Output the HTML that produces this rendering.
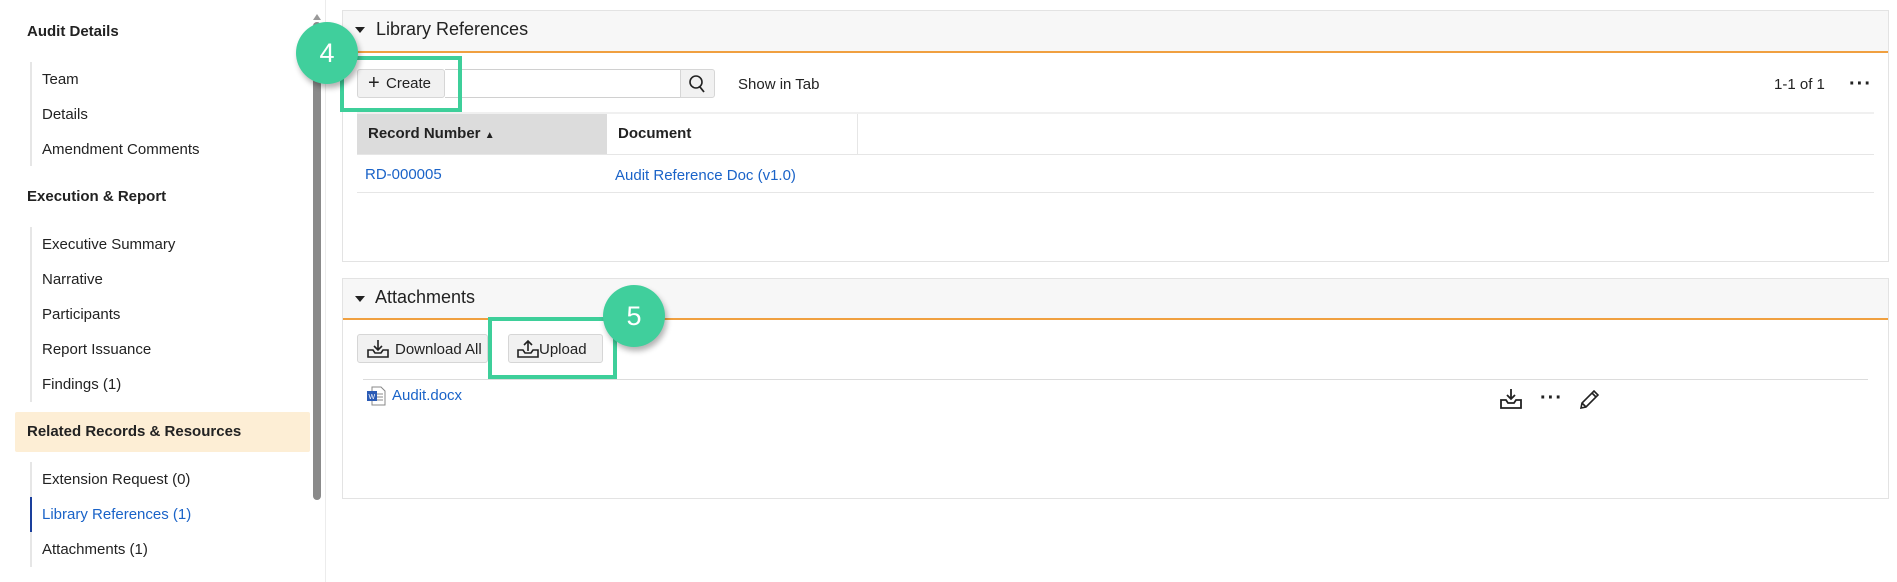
<!DOCTYPE html>
<html><head><meta charset="utf-8"><style>
*{box-sizing:border-box;margin:0;padding:0}
body{width:1897px;height:582px;background:#fff;font-family:"Liberation Sans",Arial,sans-serif;color:#222;position:relative;overflow:hidden;font-size:15px}
.a{position:absolute;white-space:nowrap}
.h{font-weight:bold;font-size:15px}
.it{font-size:15px;line-height:18px}
.vl{position:absolute;width:2px;background:#e6e6e6;left:30px}
.blue{color:#1a63c8}
.panel{position:absolute;left:342px;width:1547px;border:1px solid #e3e3e3;background:#fff}
.ph{position:absolute;left:0;top:0;right:0;background:#f7f7f7;border-bottom:2px solid #f0a040}
.btn{position:absolute;border:1px solid #d6d6d6;background:#f1f1f1;border-radius:3px;font-size:15px}
.green{position:absolute;border:4px solid #3ecf9a}
.circ{position:absolute;width:62px;height:62px;border-radius:50%;background:#40cf9c;color:#fff;font-size:27px;text-align:center;line-height:62px;box-shadow:2px 4px 6px rgba(0,0,0,.3)}
</style></head><body>
<!-- sidebar -->
<div class="a h" style="left:27px;top:23px">Audit Details</div>
<div class="vl" style="top:62px;height:104px"></div>
<div class="a it" style="left:42px;top:71px">Team</div>
<div class="a it" style="left:42px;top:106px">Details</div>
<div class="a it" style="left:42px;top:141px">Amendment Comments</div>
<div class="a h" style="left:27px;top:188px">Execution &amp; Report</div>
<div class="vl" style="top:227px;height:175px"></div>
<div class="a it" style="left:42px;top:236px">Executive Summary</div>
<div class="a it" style="left:42px;top:271px">Narrative</div>
<div class="a it" style="left:42px;top:306px">Participants</div>
<div class="a it" style="left:42px;top:341px">Report Issuance</div>
<div class="a it" style="left:42px;top:376px">Findings (1)</div>
<div class="a" style="left:15px;top:412px;width:295px;height:40px;background:#fdeed5;border-radius:2px"></div>
<div class="a h" style="left:27px;top:423px">Related Records &amp; Resources</div>
<div class="vl" style="top:462px;height:105px"></div>
<div class="a" style="left:30px;top:497px;width:2px;height:35px;background:#1a3f9c"></div>
<div class="a it" style="left:42px;top:471px">Extension Request (0)</div>
<div class="a it blue" style="left:42px;top:506px">Library References (1)</div>
<div class="a it" style="left:42px;top:541px">Attachments (1)</div>
<!-- scrollbar -->
<div class="a" style="left:313px;top:22px;width:8px;height:478px;background:#8a8a8a;border-radius:4px"></div>
<div class="a" style="left:313px;top:14px;width:0;height:0;border-left:4px solid transparent;border-right:4px solid transparent;border-bottom:6px solid #999"></div>
<div class="a" style="left:325px;top:0;width:1px;height:582px;background:#ececec"></div>

<!-- panel 1 -->
<div class="panel" style="top:10px;height:252px">
  <div class="ph" style="height:42px"></div>
</div>
<div class="a" style="left:355px;top:27px;border-left:5px solid transparent;border-right:5px solid transparent;border-top:6px solid #222"></div>
<div class="a" style="left:376px;top:19px;font-size:18px">Library References</div>
<div class="btn" style="left:357px;top:69px;width:88px;height:29px"><span class="a" style="left:10px;top:2px;font-size:20px">+</span><span class="a" style="left:28px;top:5px">Create</span></div>
<div class="a" style="left:445px;top:69px;width:236px;height:29px;border:1px solid #d0d0d0;border-left:none"></div>
<div class="btn" style="left:680px;top:69px;width:35px;height:29px;border-radius:0 3px 3px 0">
<svg width="33" height="27" viewBox="0 0 33 27"><circle cx="15" cy="12" r="6" fill="none" stroke="#222" stroke-width="1.6"/><line x1="19" y1="17" x2="23" y2="22" stroke="#222" stroke-width="1.8"/></svg></div>
<div class="a" style="left:738px;top:76px">Show in Tab</div>
<div class="a" style="left:1774px;top:76px">1-1 of 1</div>
<div class="a" style="left:1849px;top:79px;font-size:20px;letter-spacing:1px;line-height:10px;font-weight:bold">···</div>
<div class="a" style="left:357px;top:112px;width:1517px;height:2px;background:#f0f0f0"></div>
<div class="a" style="left:357px;top:114px;width:250px;height:40px;background:#dcdcdc"></div>
<div class="a" style="left:857px;top:114px;width:1px;height:40px;background:#e6e6e6"></div>
<div class="a" style="left:357px;top:154px;width:1517px;height:1px;background:#e6e6e6"></div>
<div class="a" style="left:357px;top:192px;width:1517px;height:1px;background:#e6e6e6"></div>
<div class="a h" style="left:368px;top:125px">Record Number <span style="font-size:10px">▲</span></div>
<div class="a h" style="left:618px;top:125px">Document</div>
<div class="a blue" style="left:365px;top:166px">RD-000005</div>
<div class="a blue" style="left:615px;top:167px">Audit Reference Doc (v1.0)</div>
<div class="green" style="left:340px;top:56px;width:122px;height:56px"></div>
<div class="circ" style="left:296px;top:22px">4</div>

<!-- panel 2 -->
<div class="panel" style="top:278px;height:221px">
  <div class="ph" style="height:41px"></div>
</div>
<div class="a" style="left:355px;top:296px;border-left:5px solid transparent;border-right:5px solid transparent;border-top:6px solid #222"></div>
<div class="a" style="left:375px;top:287px;font-size:18px">Attachments</div>
<div class="btn" style="left:357px;top:334px;width:131px;height:29px">
<svg class="a" style="left:9px;top:4px" width="22" height="20" viewBox="0 0 22 20"><path d="M11 1v9M7 7l4 4 4-4M1 11v7h20v-7h-5l-2 3H8l-2-3z" fill="none" stroke="#222" stroke-width="1.6"/></svg>
<span class="a" style="left:37px;top:6px">Download All</span></div>
<div class="btn" style="left:508px;top:334px;width:95px;height:29px">
<svg class="a" style="left:8px;top:4px" width="22" height="20" viewBox="0 0 22 20"><path d="M11 12V2M7 6l4-4 4 4M1 11v7h20v-7h-5l-2 3H8l-2-3z" fill="none" stroke="#222" stroke-width="1.6"/></svg>
<span class="a" style="left:30px;top:6px">Upload</span></div>
<div class="a" style="left:363px;top:379px;width:1505px;height:1px;background:#dcdcdc"></div>
<svg class="a" style="left:366px;top:386px" width="20" height="20" viewBox="0 0 20 20"><path d="M6 1h9l4 4v14H6z" fill="#fff" stroke="#888"/><path d="M9 8h8M9 11h8M9 14h8" stroke="#888"/><rect x="1" y="5" width="10" height="10" fill="#2b5bb5"/><text x="2.5" y="13" font-size="7" fill="#fff" font-family="Liberation Sans">W</text></svg>
<div class="a blue" style="left:392px;top:387px">Audit.docx</div>
<svg class="a" style="left:1499px;top:388px" width="24" height="22" viewBox="0 0 24 22"><path d="M12 1v10M8 7l4 4 4-4M2 12v8h20v-8h-5l-2 3H9l-2-3z" fill="none" stroke="#222" stroke-width="1.8"/></svg>
<div class="a" style="left:1540px;top:393px;font-size:20px;line-height:10px;font-weight:bold;letter-spacing:1px">···</div>
<svg class="a" style="left:1579px;top:389px" width="22" height="20" viewBox="0 0 22 20"><path d="M2 19l1-5L15 2l4 4L7 18z M13 4l4 4 M3 14l4 4" fill="none" stroke="#222" stroke-width="1.6"/></svg>
<div class="green" style="left:488px;top:317px;width:129px;height:62px"></div>
<div class="circ" style="left:603px;top:285px">5</div>
</body></html>
